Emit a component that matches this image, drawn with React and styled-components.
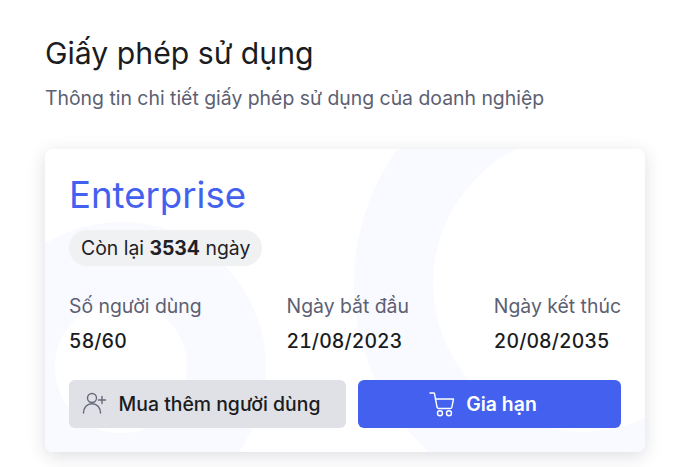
import styled, { createGlobalStyle } from "styled-components";

const GlobalStyle = createGlobalStyle`
  html, body {
    margin: 0;
    background: #fff;
    font-family: "Inter", "Noto Sans", sans-serif;
  }
`;

const Page = styled.div`
  padding: 33px 48px 15px 45px;
`;

const Title = styled.h1`
  margin: 0;
  font-size: 30.2px;
  line-height: 40px;
  font-weight: 400;
  color: #1a1c21;
`;

const Subtitle = styled.p`
  margin: 11px 0 37px;
  font-size: 19.4px;
  line-height: 28px;
  font-weight: 400;
  color: #5c6072;
`;

const Card = styled.div`
  position: relative;
  overflow: hidden;
  display: flex;
  flex-direction: column;
  height: 303px;
  box-sizing: border-box;
  padding: 24px;
  border-radius: 8px;
  background: #fff;
  box-shadow: 0 4px 18px rgba(30, 35, 60, 0.15);
`;

const Ring = styled.div`
  position: absolute;
  left: ${(props) => props.$cx - props.$outer}px;
  top: ${(props) => props.$cy - props.$outer}px;
  width: ${(props) => props.$outer * 2}px;
  height: ${(props) => props.$outer * 2}px;
  box-sizing: border-box;
  border: 79px solid #f9faff;
  border-radius: 50%;
`;

const Content = styled.div`
  position: relative;
  display: flex;
  flex-direction: column;
`;

const Plan = styled.div`
  font-size: 36.6px;
  line-height: 44px;
  font-weight: 400;
  color: #4361ee;
`;

const Pill = styled.div`
  align-self: flex-start;
  margin-top: 13px;
  padding: 0 12px;
  height: 36px;
  display: flex;
  align-items: center;
  white-space: pre;
  border-radius: 18px;
  background: #f0f1f3;
  font-size: 19.4px;
  color: #1f2126;

  b {
    font-weight: 700;
  }
`;

const Stats = styled.div`
  display: flex;
  justify-content: space-between;
  margin-top: 26px;
`;

const Stat = styled.div`
  display: flex;
  flex-direction: column;
  gap: 7px;
`;

const StatLabel = styled.div`
  font-size: 19.4px;
  line-height: 28px;
  color: #5c6072;
`;

const StatValue = styled.div`
  font-size: 19.4px;
  line-height: 28px;
  font-weight: 500;
  letter-spacing: 0.1px;
  font-variant-numeric: tabular-nums;
  color: #1a1c21;
`;

const Actions = styled.div`
  display: grid;
  grid-template-columns: 277px 263px;
  gap: 12px;
  margin-top: 25px;
`;

const Button = styled.button`
  height: 48px;
  display: flex;
  align-items: center;
  justify-content: center;
  gap: 11px;
  padding: 0 13px 0 0;
  border: 0;
  border-radius: 6px;
  background: ${(props) => (props.$primary ? "#4361ee" : "#e0e1e6")};
  color: ${(props) => (props.$primary ? "#fff" : "#1a1c21")};
  font-family: inherit;
  font-size: 19.4px;
  font-weight: ${(props) => (props.$primary ? 600 : 500)};
`;

const UserPlusIcon = () => (
  <svg width="26" height="26" viewBox="0 0 26 26" fill="none" stroke="#666a78" strokeWidth="1.4" strokeLinecap="round">
    <circle cx="10" cy="7" r="4.5" />
    <path d="M1.5 22c0-5.4 3.6-9.3 8.5-9.3s8.5 3.9 8.5 9.3" />
    <path d="M20 5.5v7M16.5 9h7" />
  </svg>
);

const CartIcon = () => (
  <svg width="26" height="26" viewBox="0 0 26 26" fill="none" stroke="#fff" strokeWidth="1.4" strokeLinecap="round" strokeLinejoin="round">
    <path d="M1 2h3.6c.5 0 .9.3 1 .8L8 16c.2 1 .9 1.5 1.8 1.5h11.4c.9 0 1.5-.5 1.7-1.4L24.5 8H6.2" />
    <circle cx="11" cy="22.2" r="2.5" />
    <circle cx="20" cy="22.2" r="2.5" />
  </svg>
);

const stats = [
  { label: "Số người dùng", value: "58/60" },
  { label: "Ngày bắt đầu", value: "21/08/2023" },
  { label: "Ngày kết thúc", value: "20/08/2035" },
];

export default function App() {
  return (
    <Page>
      <GlobalStyle />
      <Title>Giấy phép sử dụng</Title>
      <Subtitle>Thông tin chi tiết giấy phép sử dụng của doanh nghiệp</Subtitle>
      <Card>
        <Ring $cx={76} $cy={218} $outer={145} />
        <Ring $cx={537} $cy={134} $outer={228} />
        <Content>
          <Plan>Enterprise</Plan>
          <Pill>
            Còn lại <b>3534</b> ngày
          </Pill>
          <Stats>
            {stats.map((s) => (
              <Stat key={s.label}>
                <StatLabel>{s.label}</StatLabel>
                <StatValue>{s.value}</StatValue>
              </Stat>
            ))}
          </Stats>
          <Actions>
            <Button>
              <UserPlusIcon />
              Mua thêm người dùng
            </Button>
            <Button $primary>
              <CartIcon />
              Gia hạn
            </Button>
          </Actions>
        </Content>
      </Card>
    </Page>
  );
}
